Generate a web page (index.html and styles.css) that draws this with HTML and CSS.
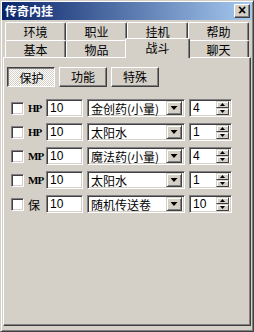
FILE: index.html
```html
<!DOCTYPE html>
<html lang="zh-CN">
<head>
    <meta charset="UTF-8">
    <title>传奇内挂</title>
    <link rel="stylesheet" href="styles.css">
</head>
<body>
    <div class="window">
        <div class="titlebar">
            <span class="title">传奇内挂</span>
            <span class="close">×</span>
        </div>
        <div class="content">
            <div class="tabs">
                <div class="tab-row back">
                    <div class="tab">环境</div>
                    <div class="tab">职业</div>
                    <div class="tab">挂机</div>
                    <div class="tab">帮助</div>
                </div>
                <div class="tab-row front">
                    <div class="tab">基本</div>
                    <div class="tab">物品</div>
                    <div class="tab active">战斗</div>
                    <div class="tab">聊天</div>
                </div>
            </div>
            <div class="panel">
                <div class="subtabs">
                    <div class="btn pressed">保护</div>
                    <div class="btn">功能</div>
                    <div class="btn">特殊</div>
                </div>
                <div class="rows">
                    <div class="row">
                        <span class="check"></span>
                        <span class="label">HP</span>
                        <span class="edit">10</span>
                        <span class="combo"><span class="val">金创药(小量)</span><span class="drop"></span></span>
                        <span class="spin"><span class="val">4</span><span class="updown"><i class="up"></i><i class="down"></i></span></span>
                    </div>
                    <div class="row">
                        <span class="check"></span>
                        <span class="label">HP</span>
                        <span class="edit">10</span>
                        <span class="combo"><span class="val">太阳水</span><span class="drop"></span></span>
                        <span class="spin"><span class="val">1</span><span class="updown"><i class="up"></i><i class="down"></i></span></span>
                    </div>
                    <div class="row">
                        <span class="check"></span>
                        <span class="label">MP</span>
                        <span class="edit">10</span>
                        <span class="combo"><span class="val">魔法药(小量)</span><span class="drop"></span></span>
                        <span class="spin"><span class="val">4</span><span class="updown"><i class="up"></i><i class="down"></i></span></span>
                    </div>
                    <div class="row">
                        <span class="check"></span>
                        <span class="label">MP</span>
                        <span class="edit">10</span>
                        <span class="combo"><span class="val">太阳水</span><span class="drop"></span></span>
                        <span class="spin"><span class="val">1</span><span class="updown"><i class="up"></i><i class="down"></i></span></span>
                    </div>
                    <div class="row">
                        <span class="check"></span>
                        <span class="label cjk">保</span>
                        <span class="edit">10</span>
                        <span class="combo"><span class="val">随机传送卷</span><span class="drop"></span></span>
                        <span class="spin"><span class="val">10</span><span class="updown"><i class="up"></i><i class="down"></i></span></span>
                    </div>
                </div>
            </div>
        </div>
    </div>
</body>
</html>
```

FILE: styles.css
```css
body {
    margin: 0;
    font-family: "Noto Sans CJK SC", sans-serif;
    font-size: 12px;
    color: #000;
}
.window {
    width: 254px;
    height: 332px;
    box-sizing: border-box;
    background: #d4d0c8;
    border: 1px solid;
    border-color: #d4d0c8 #404040 #404040 #d4d0c8;
    box-shadow: inset 1px 1px #fff, inset -1px -1px #808080;
    padding: 1px;
    display: flex;
    flex-direction: column;
}
.titlebar {
    height: 18px;
    display: flex;
    align-items: center;
    justify-content: space-between;
    background: linear-gradient(to right, #0a246a, #a6caf0);
    padding: 0 2px 0 3px;
}
.title {
    color: #fff;
    font-weight: bold;
    font-size: 12px;
    line-height: 18px;
}
.close {
    width: 16px;
    height: 14px;
    box-sizing: border-box;
    background: #d4d0c8;
    border: 1px solid;
    border-color: #fff #404040 #404040 #fff;
    box-shadow: inset -1px -1px #808080;
    font-family: "Liberation Sans", sans-serif;
    font-weight: bold;
    font-size: 14px;
    line-height: 11px;
    text-align: center;
}
.content {
    flex: 1;
    display: flex;
    flex-direction: column;
    padding: 2px 1px 4px 1px;
}
.tabs {
    padding-left: 2px;
}
.tab-row {
    display: flex;
}
.tab {
    width: 61px;
    box-sizing: border-box;
    text-align: center;
    border-top: 1px solid #fff;
    border-left: 1px solid #fff;
    border-right: 1px solid #404040;
    box-shadow: inset -1px 0 #808080;
    border-radius: 2px 2px 0 0;
    background: #d4d0c8;
}
.back .tab {
    height: 18px;
    line-height: 17px;
}
.front .tab {
    height: 17px;
    line-height: 17px;
}
.tab.active {
    position: relative;
    width: 65px;
    margin: -2px -2px -1px;
    height: 20px;
    line-height: 17px;
    z-index: 1;
}
.panel {
    flex: 1;
    border: 1px solid;
    border-color: #fff #404040 #404040 #fff;
    box-shadow: inset -1px -1px #808080;
    padding: 9px 3px 0 3px;
}
.subtabs {
    display: flex;
    gap: 4px;
}
.btn {
    width: 48px;
    height: 20px;
    box-sizing: border-box;
    border: 1px solid;
    border-color: #fff #404040 #404040 #fff;
    box-shadow: inset -1px -1px #808080;
    text-align: center;
    line-height: 18px;
}
.btn.pressed {
    border-color: #404040 #fff #fff #404040;
    box-shadow: inset 1px 1px #808080;
    background: repeating-conic-gradient(#fff 0 25%, #d4d0c8 0 50%) 0 0 / 2px 2px;
    padding-left: 1px;
    line-height: 20px;
}
.rows {
    margin-top: 12px;
    display: flex;
    flex-direction: column;
    gap: 6px;
}
.row {
    display: flex;
    align-items: center;
    height: 18px;
}
.check {
    width: 13px;
    height: 13px;
    box-sizing: border-box;
    margin-left: 4px;
    background: #fff;
    border: 1px solid;
    border-color: #808080 #fff #fff #808080;
    box-shadow: inset 1px 1px #404040, inset -1px -1px #d4d0c8;
}
.label {
    width: 18px;
    margin-left: 4px;
    font-family: "Liberation Serif", serif;
    font-weight: bold;
    font-size: 11px;
    letter-spacing: -1px;
}
.label.cjk {
    font-family: "Noto Sans CJK SC", sans-serif;
    font-weight: normal;
    font-size: 12px;
    letter-spacing: 0;
}
.edit, .combo, .spin {
    height: 18px;
    box-sizing: border-box;
    background: #fff;
    border: 1px solid;
    border-color: #808080 #fff #fff #808080;
    box-shadow: inset 1px 1px #404040, inset -1px -1px #d4d0c8;
    padding: 2px 2px 2px 2px;
    display: flex;
    align-items: center;
}
.edit {
    width: 37px;
    padding-left: 3px;
    font-family: "Liberation Sans", sans-serif;
    font-size: 12px;
}
.combo {
    width: 98px;
    margin-left: 4px;
    padding-right: 2px;
}
.spin {
    width: 43px;
    margin-left: 4px;
    font-family: "Liberation Sans", sans-serif;
    font-size: 12px;
}
.val {
    flex: 1;
    padding-left: 1px;
    white-space: nowrap;
    overflow: hidden;
}
.drop {
    width: 16px;
    height: 14px;
    box-sizing: border-box;
    border: 1px solid;
    border-color: #d4d0c8 #404040 #404040 #d4d0c8;
    box-shadow: inset 1px 1px #fff, inset -1px -1px #808080;
    background: #d4d0c8;
    display: flex;
    align-items: center;
    justify-content: center;
}
.drop::after {
    content: "";
    width: 7px;
    height: 4px;
    background: #000;
    clip-path: polygon(0 0, 100% 0, 50% 100%);
}
.updown {
    width: 13px;
    height: 14px;
    display: flex;
    flex-direction: column;
}
.updown i {
    flex: 1;
    box-sizing: border-box;
    border: 1px solid;
    border-color: #d4d0c8 #404040 #404040 #d4d0c8;
    box-shadow: inset 1px 1px #fff;
    background: #d4d0c8;
    display: flex;
    align-items: center;
    justify-content: center;
}
.updown i::after {
    content: "";
    width: 5px;
    height: 3px;
    background: #000;
}
.updown .up::after {
    clip-path: polygon(50% 0, 100% 100%, 0 100%);
}
.updown .down::after {
    clip-path: polygon(0 0, 100% 0, 50% 100%);
}
```
